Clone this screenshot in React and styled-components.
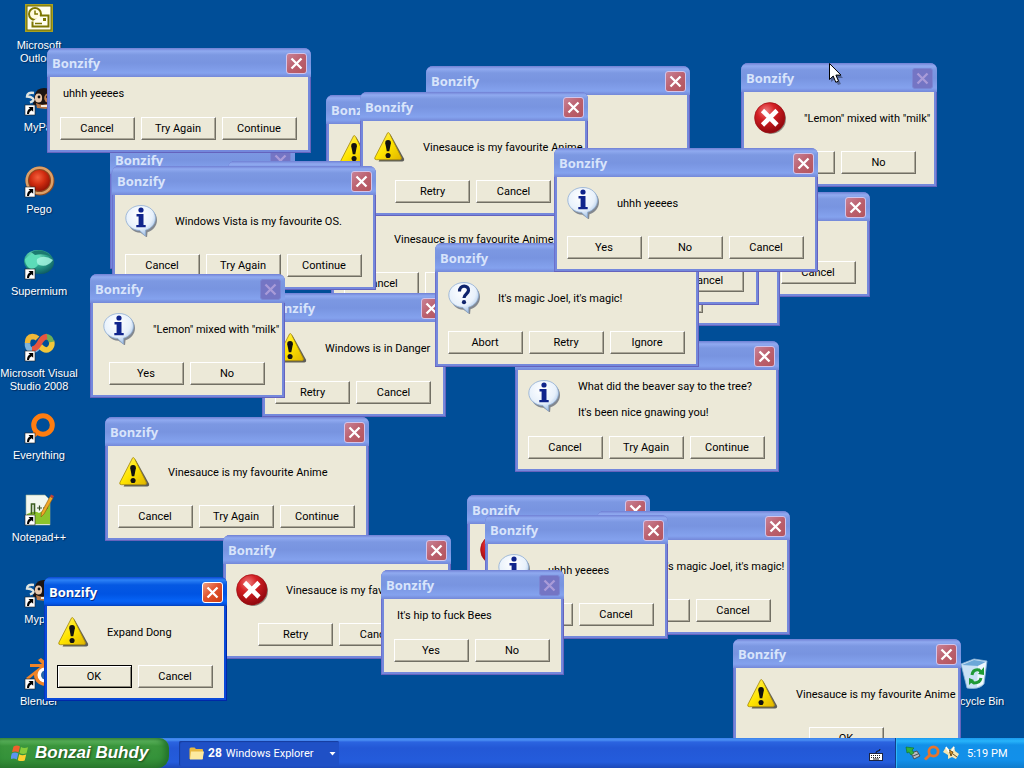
import React from "react";
import styled, { createGlobalStyle, css } from "styled-components";

const Global = createGlobalStyle`
  *, *::before, *::after { box-sizing: border-box; }
  html, body, #root { height: 100%; }
  body { margin: 0; overflow: hidden; font: 11px/13px Roboto, "Liberation Sans", sans-serif; }
  button { font: inherit; padding: 0; }
`;

const Screen = styled.div`
  display: flex;
  flex-direction: column;
  height: 100vh;
  background: #004e98;
`;

const Desktop = styled.main`
  position: relative;
  flex: 1;
  min-height: 0;
  display: flex;
  justify-content: space-between;
  overflow: hidden;
`;

const IconColumn = styled.nav`
  display: flex;
  flex-direction: column;
  justify-content: ${(p) => (p.$end ? "flex-end" : "flex-start")};
  margin: ${(p) => (p.$end ? "0 11px 0 0" : "0 0 0 1px")};
`;

const Shortcut = styled.a`
  display: flex;
  flex-direction: column;
  align-items: center;
  gap: 5px;
  flex: none;
  width: 76px;
  height: 82px;
  padding-top: 2px;
  color: #fff;
  font-family: "Liberation Sans", sans-serif;
  text-align: center;
  text-decoration: none;
  text-shadow: 1px 1px 1px #002a5c;
`;

const ShortcutName = styled.span`
  margin: 0 -1px;
`;

const Windows = styled.div`
  position: absolute;
  inset: 0;
`;

const Frame = styled.section`
  position: absolute;
  left: ${(p) => p.$x}px;
  top: ${(p) => p.$y}px;
  width: ${(p) => p.$w}px;
  padding: 0 3px 3px;
  border-radius: 7px 7px 0 0;
  overflow: hidden;
  background: ${(p) => (p.$active ? "#0a4ad8" : "#7488dc")};
  box-shadow: inset -1px -1px 0 ${(p) => (p.$active ? "#0028a8" : "#6563bd")},
    inset 1px 0 0 ${(p) => (p.$active ? "#0835c0" : "#6c70cc")};
`;

const activeBar = css`
  background: linear-gradient(#0a47d0 0, #2c82f6 3px, #0558e2 8px, #0054e3 17px, #0663f6 24px, #0454e4 27px, #0340b8 29px);
  color: #fff;
  text-shadow: 1px 1px 0 #0a2f86;
`;

const idleBar = css`
  background: linear-gradient(#7080d4 0, #90aaf0 3px, #7c98e2 7px, #7894e0 15px, #84a2ee 25px, #7488d8 29px);
  color: #d8e4fb;
`;

const TitleBar = styled.header`
  display: flex;
  align-items: center;
  justify-content: space-between;
  height: 29px;
  margin: 0 -3px;
  padding: 1px 4px 0 5px;
  ${(p) => (p.$active ? activeBar : idleBar)}
`;

const Title = styled.h2`
  margin: 0;
  font: bold 13px/16px "Open Sans", "Noto Sans", sans-serif;
`;

const CloseButton = styled.button`
  display: grid;
  place-items: center;
  width: 21px;
  height: 21px;
  border: 1px solid #fff;
  border-radius: 3px;
  background: linear-gradient(135deg, #f0a083 0, #e0532e 45%, #cc3c12 100%);
  ${(p) =>
    !p.$active &&
    css`
      border-color: #d2c4ea;
      background: linear-gradient(135deg, #c98296 0, #bb606e 50%, #b4565e 100%);
    `}
  &:disabled {
    border-color: #7a86d4;
    background: #7475c4;
  }
`;

const Body = styled.div`
  padding: 10px 10px;
  background: #ece9d8;
  color: #000;
`;

const Message = styled.div`
  display: grid;
  grid-template-columns: ${(p) => (p.$icon ? "32px 1fr" : "1fr")};
  column-gap: 18px;
  padding-left: ${(p) => (p.$icon ? "0" : "3px")};
  margin-bottom: 17px;

  p {
    align-self: center;
    margin: 0;
    white-space: pre;
  }
`;

const Choices = styled.footer`
  display: flex;
  justify-content: center;
  gap: 6px;
  margin: 0 -8px;
  padding-right: 2px;
`;

const Choice = styled.button`
  flex: none;
  width: 75px;
  height: 23px;
  border: 1px solid;
  border-color: #fff #716f64 #716f64 #fff;
  background: #ece9d8;
  color: #000;
  box-shadow: inset -1px -1px 0 #aca899;
  ${(p) =>
    p.$default &&
    css`
      border-color: #000;
      box-shadow: inset 1px 1px 0 #fff, inset -1px -1px 0 #8a877a;
    `}
`;

const Pointer = styled.svg`
  position: absolute;
  left: 829px;
  top: 63px;
`;

const Taskbar = styled.footer`
  display: flex;
  align-items: stretch;
  flex: none;
  height: 30px;
  background: linear-gradient(#3a80ea 0, #4a90f4 2px, #2b64e0 4px, #2358d6 10px, #245cdc 24px, #1c48b8 30px);
`;

const StartButton = styled.button`
  display: flex;
  align-items: center;
  gap: 6px;
  width: 169px;
  padding: 0 0 1px 11px;
  border: 0;
  border-radius: 0 10px 12px 0;
  background: linear-gradient(#4a9a4a 0, #5cb45c 3px, #3a953c 8px, #35923a 20px, #2d7d30 30px);
  box-shadow: inset -4px 0 6px #22702a;
  color: #fff;
  font: italic bold 17px/22px "Liberation Sans", sans-serif;
  text-shadow: 1px 1px 2px #1c4a1c;
`;

const TaskButton = styled.button`
  display: flex;
  align-items: center;
  width: 160px;
  margin: 3px 0 2px 10px;
  padding: 0 3px 0 10px;
  border: 0;
  border-radius: 2px;
  background: #1f50c6;
  box-shadow: inset 1px 1px 1px #163c9e;
  color: #fff;

  b { margin: 0 4px; font-size: 12px; }
  svg:last-child { margin-left: auto; }
`;

const TrayGap = styled.div`
  flex: 1;
  display: flex;
  align-items: center;
  justify-content: flex-end;
  padding: 3px 12px 0 0;
`;

const Tray = styled.div`
  display: flex;
  align-items: center;
  gap: 3px;
  width: 129px;
  padding-left: 9px;
  border-left: 1px solid #10408c;
  background: linear-gradient(#1a9af0 0, #28b4fa 3px, #1290e8 7px, #1290ea 22px, #0f7ccc 30px);
  box-shadow: inset 1px 0 0 #30b8f8;
  color: #fff;

  time { margin-left: 5px; }
`;

const Paints = () => (
  <svg width="0" height="0" style={{ position: "absolute" }} aria-hidden="true">
    <defs>
      <radialGradient id="redBall" cx="38%" cy="28%" r="75%">
        <stop offset="0" stopColor="#f08080" />
        <stop offset="0.4" stopColor="#d42024" />
        <stop offset="1" stopColor="#8c060c" />
      </radialGradient>
      <radialGradient id="pegoBall" cx="42%" cy="35%" r="70%">
        <stop offset="0" stopColor="#f4603c" />
        <stop offset="0.5" stopColor="#d02c10" />
        <stop offset="1" stopColor="#8c1004" />
      </radialGradient>
      <radialGradient id="bubble" cx="45%" cy="30%" r="75%">
        <stop offset="0" stopColor="#fff" />
        <stop offset="0.6" stopColor="#e8f1fb" />
        <stop offset="1" stopColor="#93b6e0" />
      </radialGradient>
      <linearGradient id="caution" x1="0" y1="0" x2="1" y2="1">
        <stop offset="0" stopColor="#fff27a" />
        <stop offset="0.5" stopColor="#ffe500" />
        <stop offset="1" stopColor="#e0b400" />
      </linearGradient>
      <radialGradient id="teal" cx="35%" cy="30%" r="75%">
        <stop offset="0" stopColor="#8ff0cc" />
        <stop offset="0.5" stopColor="#2ea88e" />
        <stop offset="1" stopColor="#0d5a62" />
      </radialGradient>
    </defs>
  </svg>
);

const Bubble = ({ children }) => (
  <svg width="32" height="32" viewBox="0 0 32 32">
    <path d="M17 2c8.500 0 15 5.600 15 13 0 6-4 10.500-9.500 12.200L22 32.500l-6.500-4.700C8 27.500 3 22 3 15.500 3 8 9 2 17 2z" fill="#4b5468" opacity="0.65" />
    <path d="M16 0.500C24.300 0.500 30.500 6 30.500 13c0 6-4.300 10.800-10 12.200l-0.200 5.800-5.600-5.500C7 25.200 0.800 20 0.800 13 0.800 6 7.500 0.500 16 0.500z" fill="url(#bubble)" stroke="#8fadd4" strokeWidth="0.800" />
    {children}
  </svg>
);

const InfoIcon = () => (
  <Bubble>
    <circle cx="16" cy="5" r="2.600" fill="#10248c" />
    <path d="M11.500 9h7v11h2.200v2.300H11.300V20h2.300v-8.500h-2.100z" fill="#10248c" />
  </Bubble>
);

const QuestionIcon = () => (
  <Bubble>
    <path d="M11.500 9.500C11.500 2 21 3 20.500 8.500c-0.300 3.500-4.500 3.500-4.500 7.500" fill="none" stroke="#10246c" strokeWidth="3.200" />
    <circle cx="16" cy="20.200" r="2.100" fill="#10246c" />
  </Bubble>
);

const WarningIcon = () => (
  <svg width="32" height="32" viewBox="-1 -1 34 34">
    <path d="M17.500 2.500L32 28.500c0.500 1.800-0.500 3-2 3H5z" fill="#3a3a38" opacity="0.8" />
    <path d="M14.500 1q1.200-0.800 2 0.600l12.500 25.200q0.900 2.700-1.700 2.700H2.800Q0 29.500 1.100 27z" fill="url(#caution)" stroke="#a88c10" strokeWidth="0.900" />
    <path d="M12 12Q11.800 8.500 15 8.500T18 12l-1.700 8.500h-2.600z" fill="#111" />
    <circle cx="15" cy="25" r="2.700" fill="#111" />
  </svg>
);

const ErrorIcon = () => (
  <svg width="32" height="32" viewBox="0 0 32 32">
    <circle cx="17" cy="17" r="15" fill="#50504c" opacity="0.6" />
    <circle cx="15.800" cy="15.800" r="15.200" fill="url(#redBall)" stroke="#a01014" strokeWidth="0.700" />
    <path d="M8.500 8.500l14.500 14.500M23 8.500L8.500 23" stroke="#fff" strokeWidth="4.600" />
  </svg>
);

const messageIcons = { info: InfoIcon, question: QuestionIcon, warning: WarningIcon, error: ErrorIcon };

const Arrow = () => (
  <g>
    <rect x="2" y="21" width="10" height="10" fill="#fff" stroke="#222" strokeWidth="0.600" />
    <path d="M5.500 23H10.200v4.800L8.600 26.200Q6 27.500 6 30H4q0-4 3-5.400z" fill="#000" />
  </g>
);

const Picture = ({ children, plain }) => (
  <svg width="32" height="32" viewBox="0 0 32 32" aria-hidden="true">
    {children}
    {!plain && <Arrow />}
  </svg>
);

const OutlookPicture = () => (
  <Picture plain>
    <rect x="2" y="2" width="28" height="28" fill="#a8a020" />
    <rect x="4" y="4" width="24" height="24" fill="#fffef0" stroke="#6e6a00" />
    <circle cx="12" cy="12" r="6" fill="#fffbe0" stroke="#7c7600" strokeWidth="2" />
    <path d="M12 8.500V12h3" fill="none" stroke="#7c7600" strokeWidth="1.500" />
    <path d="M17 13.500h8.500v11h-16v-5" fill="#fffef0" stroke="#7c7600" strokeWidth="2" />
    <path d="M12 21.500h7" stroke="#7c7600" strokeWidth="1.500" />
    <rect x="20" y="16" width="3" height="3" fill="#7c7600" />
  </Picture>
);

const PalPicture = () => (
  <Picture>
    <path d="M12 10q2-6 9-6 9 0 10 8l-1 9-12 3-8-4z" fill="#1c1412" />
    <path d="M11 9Q4 8 4 12.500q4 0 6 2t-3 4" fill="none" stroke="#dfe4e0" strokeWidth="2.400" />
    <ellipse cx="15.500" cy="14" rx="3.600" ry="4.500" fill="#e8c8ac" />
    <ellipse cx="25" cy="14" rx="3.800" ry="4.500" fill="#c08050" />
    <path d="M13 19q7 4 15-1l1 4-6 3-9-1z" fill="#b87848" />
    <circle cx="16" cy="13" r="1.400" fill="#111" />
    <circle cx="24.500" cy="13" r="1.400" fill="#111" />
    <path d="M18 21h6v2h-6z" fill="#f4ece0" />
  </Picture>
);

const PegoPicture = () => (
  <Picture>
    <circle cx="17" cy="15" r="14.500" fill="#8c4820" />
    <circle cx="16.500" cy="14.500" r="12.800" fill="none" stroke="#dca068" strokeWidth="2.500" />
    <circle cx="16.500" cy="14.500" r="10.500" fill="url(#pegoBall)" />
  </Picture>
);

const SupermiumPicture = () => (
  <Picture>
    <ellipse cx="16" cy="14" rx="15" ry="12" fill="url(#teal)" transform="rotate(8 16 14)" />
    <path d="M2 11q8-8 14-5 3 6-1 11-5 6-9 3-4-3-4-9z" fill="#5cdcb8" />
    <path d="M14 11q7-5 16 1-6 8-14 5-3-2-2-6z" fill="#a4f4e0" opacity="0.85" />
    <path d="M8 4q12-5 21 5-8-4-17-2z" fill="#1a7a70" />
  </Picture>
);

const StudioPicture = () => (
  <Picture>
    <g fill="none" strokeWidth="5.500">
      <path d="M15 17q-3 4-7 3-4-2-3.500-7" stroke="#7fb4dc" />
      <path d="M4.500 13q0-6 5-6.500 3 0 5 2" stroke="#f0b838" />
      <path d="M17 16q5 6 9 3 4-3 2.500-8" stroke="#f2c63a" />
      <path d="M28.500 12q-1-5-6-5.500" stroke="#6cae58" />
      <path d="M9 19q4 0 7-5 3-7 8-7.500" stroke="#e85640" />
    </g>
  </Picture>
);

const EverythingPicture = () => (
  <Picture>
    <circle cx="20" cy="13" r="9.300" fill="none" stroke="#ff7d10" strokeWidth="5" />
    <path d="M14 20l-6 6" stroke="#ff7d10" strokeWidth="5" />
  </Picture>
);

const NotepadPicture = () => (
  <Picture>
    <path d="M3 1h19l5 5v25H3z" fill="#f2f7ef" stroke="#9cb090" strokeWidth="0.600" />
    <path d="M4 20q8-4 12-1 5-2 11-9v20H4z" fill="#8cc42c" />
    <path d="M8.500 20V10h3v10" fill="none" stroke="#3a5c20" strokeWidth="1.600" />
    <path d="M14 14h5m-2.500-2.500v5M20 14h5m-2.500-2.500v5" stroke="#344c24" strokeWidth="1.200" />
    <path d="M30 4L21 20l-3 3 0.500-4.500L27 2.500z" fill="#f0a828" stroke="#8c5810" strokeWidth="0.600" />
    <path d="M27 2.500l3 1.500 1-2-3-1.500z" fill="#c04038" />
  </Picture>
);

const BlenderPicture = () => (
  <Picture>
    <path d="M3 20L17 9H7V6h12l-4-4 3-2 13 11v12q-6 8-15 3-5-3-5-9l-6 5z" fill="#f08428" />
    <circle cx="22" cy="17" r="7.500" fill="#fff" />
    <circle cx="22.500" cy="17" r="4.500" fill="#2465a8" />
  </Picture>
);

const BinPicture = () => (
  <Picture plain>
    <path d="M2 6l13-5 13 2-3 23q-5 6-17 4z" fill="#c9e2f5" stroke="#8fb6d8" strokeWidth="0.800" />
    <path d="M3 7l12-5 12 2-8 4z" fill="#6ca8d8" />
    <path d="M19 8l8-4-3 22-6 3z" fill="#eef8ff" />
    <g fill="none" stroke="#1f9a36" strokeWidth="3">
      <path d="M13 17q1-6 7-5l2 2M22 20q-1 5-7 5l-3-2" />
    </g>
    <path d="M19 16l6 1V9zM15 22l-5-2 0 7z" fill="#1f9a36" />
  </Picture>
);

const CloseGlyph = ({ dim }) => (
  <svg width="13" height="13" viewBox="0 0 13 13" aria-hidden="true">
    <path d="M1.500 1.500l10 10M11.500 1.500l-10 10" stroke={dim ? "#a99bd8" : "#fff"} strokeWidth="2.300" />
  </svg>
);

function MessageBox({ x, y, w, text, icon, buttons, active, locked }) {
  const Icon = icon && messageIcons[icon];
  return (
    <Frame $x={x} $y={y} $w={w} $active={active} role="dialog" aria-label="Bonzify">
      <TitleBar $active={active}>
        <Title>Bonzify</Title>
        <CloseButton $active={active} disabled={locked} aria-label="Close">
          <CloseGlyph dim={locked} />
        </CloseButton>
      </TitleBar>
      <Body>
        <Message $icon={Boolean(Icon)}>
          {Icon && <Icon />}
          <p>{text}</p>
        </Message>
        <Choices>
          {buttons.map((label, i) => (
            <Choice key={label} $default={active && i === 0}>
              {label}
            </Choice>
          ))}
        </Choices>
      </Body>
    </Frame>
  );
}

const anime = "Vinesauce is my favourite Anime";
const lemon = '"Lemon" mixed with "milk"';
const magic = "It's magic Joel, it's magic!";
const danger = "Windows is in Danger";
const yes = "uhhh yeeees";
const beaver = "What did the beaver say to the tree?\n\nIt's been nice gnawing you!";

const yesNo = ["Yes", "No"];
const yesNoCancel = ["Yes", "No", "Cancel"];
const retryCancel = ["Retry", "Cancel"];
const okCancel = ["OK", "Cancel"];
const cancelTry = ["Cancel", "Try Again", "Continue"];
const abortRetry = ["Abort", "Retry", "Ignore"];

/* Back to front. */
const boxes = [
  { x: 426, y: 66, w: 264, text: yes, icon: "info", buttons: yesNoCancel },
  { x: 326, y: 95, w: 196, text: danger, icon: "warning", buttons: okCancel },
  { x: 110, y: 145, w: 185, text: danger, icon: "info", buttons: yesNo, locked: true },
  { x: 228, y: 161, w: 184, text: yes, icon: "info", buttons: okCancel },
  { x: 741, y: 63, w: 196, text: lemon, icon: "error", buttons: yesNo, locked: true },
  { x: 606, y: 192, w: 264, text: yes, buttons: yesNoCancel },
  { x: 552, y: 202, w: 228, text: anime, icon: "info", buttons: ["OK"] },
  { x: 494, y: 181, w: 265, text: yes, icon: "info", buttons: yesNoCancel },
  { x: 331, y: 184, w: 264, text: anime, icon: "info", buttons: cancelTry },
  { x: 360, y: 92, w: 228, text: anime, icon: "warning", buttons: retryCancel },
  { x: 47, y: 48, w: 264, text: yes, buttons: cancelTry },
  { x: 112, y: 166, w: 264, text: "Windows Vista is my favourite OS.", icon: "info", buttons: cancelTry },
  { x: 262, y: 293, w: 184, text: danger, icon: "warning", buttons: retryCancel },
  { x: 90, y: 274, w: 195, text: lemon, icon: "info", buttons: yesNo, locked: true },
  { x: 515, y: 341, w: 264, text: beaver, icon: "info", buttons: cancelTry },
  { x: 435, y: 243, w: 264, text: magic, icon: "question", buttons: abortRetry },
  { x: 554, y: 148, w: 264, text: yes, icon: "info", buttons: yesNoCancel },
  { x: 105, y: 417, w: 264, text: anime, icon: "warning", buttons: cancelTry },
  { x: 467, y: 495, w: 183, text: yes, icon: "error", buttons: retryCancel },
  { x: 597, y: 511, w: 193, text: magic, icon: "info", buttons: okCancel },
  { x: 485, y: 515, w: 183, text: yes, icon: "info", buttons: okCancel },
  { x: 223, y: 535, w: 228, text: anime, icon: "error", buttons: retryCancel },
  { x: 381, y: 570, w: 183, text: "It's hip to fuck Bees", buttons: yesNo, locked: true },
  { x: 733, y: 639, w: 228, text: anime, icon: "warning", buttons: ["OK"] },
  { x: 44, y: 577, w: 183, text: "Expand Dong", icon: "warning", buttons: okCancel, active: true },
];

const shortcuts = [
  ["Microsoft Outlook", OutlookPicture],
  ["MyPal", PalPicture],
  ["Pego", PegoPicture],
  ["Supermium", SupermiumPicture],
  ["Microsoft Visual Studio 2008", StudioPicture],
  ["Everything", EverythingPicture],
  ["Notepad++", NotepadPicture],
  ["Mypal", PalPicture],
  ["Blender", BlenderPicture],
];

export default function App() {
  return (
    <Screen>
      <Global />
      <Paints />
      <Desktop>
        <IconColumn aria-label="Desktop shortcuts">
          {shortcuts.map(([name, Art]) => (
            <Shortcut key={name} href="#">
              <Art />
              <ShortcutName>{name}</ShortcutName>
            </Shortcut>
          ))}
        </IconColumn>
        <IconColumn $end aria-label="System items">
          <Shortcut href="#">
            <BinPicture />
            <ShortcutName>Recycle Bin</ShortcutName>
          </Shortcut>
        </IconColumn>
        <Windows>
          {boxes.map((box) => (
            <MessageBox key={`${box.x}-${box.y}`} {...box} />
          ))}
          <Pointer width="14" height="22" viewBox="0 0 14 22" aria-hidden="true">
            <path d="M2 2v17l4-3 3 6 3-1-3-6h5z" fill="#000" opacity="0.35" />
            <path d="M0.500 0.500v16l3.700-3.500 2.600 6.300 2.700-1.200-2.600-6H12z" fill="#fff" stroke="#000" />
          </Pointer>
        </Windows>
      </Desktop>
      <Taskbar>
        <StartButton>
          <svg width="18" height="18" viewBox="0 0 18 18" aria-hidden="true">
            <path d="M2.500 2.500q3.500-2 6.500 0L7.500 8.500q-3-1.800-6.500-0.200z" fill="#f0602c" />
            <path d="M10 3q3 1.800 7 0.200l-1.500 6q-3.500 1.500-7-0.200z" fill="#86cc3c" />
            <path d="M0.800 9.500q3-1.800 6.500 0L5.800 15.500q-3-1.800-6.500-0.200z" fill="#5c94f0" />
            <path d="M8.200 10.200q3 1.800 7 0.200l-1.500 6q-3.500 1.500-7-0.200z" fill="#fcd030" />
          </svg>
          Bonzai Buhdy
        </StartButton>
        <TaskButton>
          <svg width="15" height="13" viewBox="0 0 15 13" aria-hidden="true">
            <path d="M0.500 2q0-1.500 1.500-1.500h3.500l1.500 1.500h6q1 0 1 1v9h-13.500z" fill="#e8b840" />
            <path d="M2 4.500h13L13.500 12.500H1z" fill="#fdeaa0" />
          </svg>
          <b>28</b>
          Windows Explorer
          <svg width="7" height="4" viewBox="0 0 7 4" aria-hidden="true">
            <path d="M0.500 0h6L3.500 3.500z" fill="#fff" />
          </svg>
        </TaskButton>
        <TrayGap>
          <svg width="14" height="12" viewBox="0 0 14 12" aria-hidden="true">
            <path d="M7 4q0-2 2-2t2-2" fill="none" stroke="#111" />
            <rect x="0.500" y="4.500" width="13" height="7" fill="#fff" stroke="#1c2440" />
            <path d="M2 6.500h10M2 8.500h10" stroke="#222" strokeDasharray="1 1" />
            <path d="M4 10h6" stroke="#222" />
          </svg>
        </TrayGap>
        <Tray>
          <svg width="16" height="16" viewBox="0 0 16 16" aria-hidden="true">
            <path d="M6 8l6-2 3 5-6 3z" fill="#b8bcc0" stroke="#4a5058" />
            <path d="M8 11l5-2" stroke="#4a5058" />
            <path d="M1 2l8 1-2 2 2 3-3 2-2-3-2 1z" fill="#30b040" stroke="#107020" strokeWidth="0.600" />
          </svg>
          <svg width="16" height="16" viewBox="0 0 16 16" aria-hidden="true">
            <circle cx="9.500" cy="6.500" r="4.600" fill="none" stroke="#e8742c" strokeWidth="2.800" />
            <path d="M6 10l-5 4.500" stroke="#e8742c" strokeWidth="3" />
          </svg>
          <svg width="16" height="16" viewBox="0 0 16 16" aria-hidden="true">
            <path d="M3 2l4 3 4-4 1 5 4 3-3 5-4-2-4 2 0-4-5-3z" fill="#f6e6b0" />
            <path d="M6 5l4 2-2 4zM10 9l4 3" fill="#d89420" stroke="#5a4010" strokeWidth="0.900" />
            <path d="M3 2l3 5M11 2L9 6" stroke="#fff" strokeWidth="1.500" />
          </svg>
          <time>5:19 PM</time>
        </Tray>
      </Taskbar>
    </Screen>
  );
}
